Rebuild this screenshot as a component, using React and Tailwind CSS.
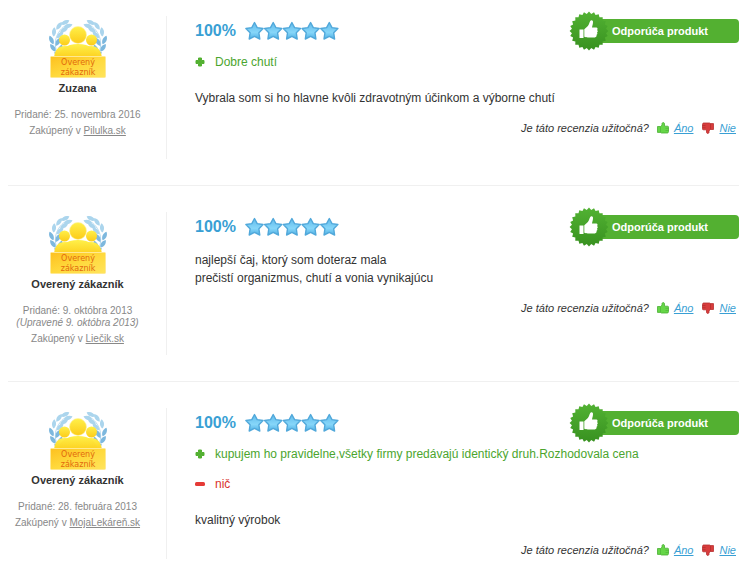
const reviews = [
  {
    name: 'Zuzana',
    added: '25. novembra 2016',
    shop: 'Pilulka.sk',
    pros: ['Dobre chutí'],
    cons: [],
    text: ['Vybrala som si ho hlavne kvôli zdravotným účinkom a výborne chutí'],
  },
  {
    name: 'Overený zákazník',
    added: '9. októbra 2013',
    edited: '9. októbra 2013',
    shop: 'Liečik.sk',
    pros: [],
    cons: [],
    text: ['najlepší čaj, ktorý som doteraz mala', 'prečistí organizmus, chutí a vonia vynikajúcu'],
  },
  {
    name: 'Overený zákazník',
    added: '28. februára 2013',
    shop: 'MojaLekáreň.sk',
    pros: ['kupujem ho pravidelne,všetky firmy predávajú identický druh.Rozhodovala cena'],
    cons: ['nič'],
    text: ['kvalitný výrobok'],
  },
];

// x, y, rotation of each leaf on the left branch
const leaves = [
  [3, 28, -35],
  [1.5, 20, -25],
  [4, 12, 5],
  [9, 6, 35],
  [15, 2.5, 65],
  [10, 29, 25],
  [8, 22, 30],
  [10, 15, 45],
  [14, 10, 60],
  [18, 6, 70],
  [8, 35, -50],
];

function Laurel() {
  return (
    <g>
      <path d="M9 36C2 25 5 11 18 4" fill="none" stroke="#a5d0ea" strokeWidth="0.8" />
      {leaves.map(([x, y, angle]) => (
        <path
          key={`${x}-${y}`}
          transform={`translate(${x} ${y}) rotate(${angle})`}
          d="M0-4.800C2.800-2 2.600 2 0 4.600-2.600 2-2.800-2 0-4.800z"
          fill={y > 17 ? '#7db8de' : '#abd5ed'}
        />
      ))}
    </g>
  );
}

function VerifiedBadge() {
  return (
    <svg className="block h-[60px] w-14 overflow-visible" viewBox="0 0 56 60" role="img" aria-label="Overený zákazník">
      <defs>
        <linearGradient id="gold" x1="0" y1="0" x2="0" y2="1">
          <stop offset="0" stopColor="#fff04a" />
          <stop offset="1" stopColor="#fccb18" />
        </linearGradient>
        <linearGradient id="plate" x1="0" y1="0" x2="1" y2="1">
          <stop offset="0" stopColor="#fdc01f" />
          <stop offset="0.5" stopColor="#ffd93c" />
          <stop offset="1" stopColor="#ffe45c" />
        </linearGradient>
      </defs>
      <Laurel />
      <g transform="translate(56 0) scale(-1 1)">
        <Laurel />
      </g>
      <g fill="url(#gold)">
        <circle cx="14.5" cy="20" r="5.5" />
        <circle cx="41.5" cy="20" r="5.5" />
        <path d="M4 40c0-10 4-14 11-14s9 4 10 14z" />
        <path d="M31 40c1-10 4-14 10-14s11 4 11 14z" />
        <path d="M8 40c1-11 8-16 20-16s19 5 20 16z" />
        <circle cx="28" cy="15" r="8.500" stroke="#fff3a0" strokeWidth="0.6" />
      </g>
      <rect x="0.5" y="36.500" width="55" height="21" rx="1" fill="url(#plate)" stroke="#ffe992" />
      <g fill="#e2690c" fontFamily="DejaVu Sans, sans-serif" fontSize="8" textAnchor="middle">
        <text x="28" y="45">Overený</text>
        <text x="28" y="55">zákazník</text>
      </g>
    </svg>
  );
}

function Stars() {
  return (
    <svg className="h-5 w-[94px]" viewBox="0 0 94 20" role="img" aria-label="5 z 5 hviezdičiek">
      <defs>
        <linearGradient id="star" x1="0" y1="0" x2="0" y2="1">
          <stop offset="0" stopColor="#62bcec" />
          <stop offset="0.6" stopColor="#86d6f9" />
          <stop offset="1" stopColor="#50b0e4" />
        </linearGradient>
      </defs>
      {[0, 1, 2, 3, 4].map((i) => (
        <path
          key={i}
          transform={`translate(${i * 18.7} 0)`}
          d="M9.500 1.500l2.700 5.100 5.900.9-4.200 4.300.9 6.200-5.300-2.600-5.300 2.600.9-6.200L.9 7.500l5.900-.9z"
          fill="url(#star)"
          stroke="#51a8da"
          strokeWidth="1.4"
          strokeLinejoin="round"
        />
      ))}
    </svg>
  );
}

const sealPoints = Array.from({ length: 48 }, (_, i) => {
  const r = i % 2 ? 17.2 : 19.4;
  const a = (i * Math.PI) / 24;
  return `${(20 + r * Math.cos(a)).toFixed(2)},${(20 + r * Math.sin(a)).toFixed(2)}`;
}).join(' ');

function Recommended() {
  return (
    <div className="flex shrink-0 items-center">
      <svg className="relative -mr-5 size-10" viewBox="0 0 40 40" aria-hidden="true">
        <defs>
          <linearGradient id="seal" x1="0" y1="0" x2="0" y2="1">
            <stop offset="0" stopColor="#52b233" />
            <stop offset="1" stopColor="#389120" />
          </linearGradient>
        </defs>
        <polygon points={sealPoints} fill="url(#seal)" />
        <path d="M10.500 18.500h4v8.500h-4z" fill="#fff" />
        <path
          d="M15.300 18.300l3.600-3.300c1.200-1.500 1.400-3.600 2.500-5.300.8-1 2.500-.5 2.600 1 .1 2-.7 3.900-1 5.700h4.200c1.500 0 1.800 1.800.9 2.500 1 .7.8 2.100-.1 2.500.7.8.3 2.100-.5 2.400.4 1.100-.2 2.600-1.700 2.600h-7c-1.500 0-2.300-.2-3.500-.6z"
          fill="#fff"
        />
      </svg>
      <div className="w-[150px] rounded-sm bg-[#53b031] pl-[23px] text-[11px] leading-6 font-bold text-white">
        Odporúča produkt
      </div>
    </div>
  );
}

function Thumb({ down }) {
  return (
    <svg className={down ? 'size-3 rotate-180' : 'size-3'} viewBox="0 0 12 12" aria-hidden="true">
      <path
        d="M.5 4.500h3L5 3.200V1.500c.3-1.200 2.200-1.200 2.500 0v2.700h3c.8 0 1 .4 1 1v4.300c0 .9-.4 1.500-1.300 1.500H4.500l-1-.6h-3z"
        fill={down ? '#d83c3c' : '#66d648'}
        stroke={down ? '#b83030' : '#4aae34'}
        strokeWidth="0.8"
      />
      <path d="M3.500 4.500v6M8.500 6.300h3M8.500 8.500h3" stroke={down ? '#a82a2a' : '#4aae34'} strokeWidth="0.6" />
    </svg>
  );
}

function Point({ minus, children }) {
  return (
    <li className={minus ? 'flex items-center gap-[10px] text-[#d9322f]' : 'flex items-center gap-[10px] text-[#4ba52e]'}>
      <svg className="size-[10px] shrink-0" viewBox="0 0 10 10" aria-hidden="true">
        {minus ? (
          <rect x="0" y="3" width="10" height="4" rx="1.500" fill="#e53a36" />
        ) : (
          <path d="M3.500 1h3v2.500H9v3H6.500V9h-3V6.500H1v-3h2.500z" fill="#53b031" stroke="#53b031" strokeLinejoin="round" />
        )}
      </svg>
      {children}
    </li>
  );
}

function Review({ review }) {
  const { name, added, edited, shop, pros, cons, text } = review;
  const points = pros.length + cons.length > 0;

  return (
    <article className="flex border-b border-[#f0f0f0] py-[26px] first:pt-4 last:border-b-0">
      <div className="flex w-[159px] shrink-0 flex-col items-center border-r border-[#f0f0f0] pt-1 pr-[19px] text-center">
        <VerifiedBadge />
        <h3 className="text-[11px] leading-4 font-bold text-[#333]">{name}</h3>
        <div className="mt-[13px] text-[10px] leading-3 whitespace-nowrap text-[#888]">
          <p>Pridané: {added}</p>
          {edited && <p className="italic">(Upravené {edited})</p>}
          <p className="mt-1">
            Zakúpený v <a href="#" className="underline">{shop}</a>
          </p>
        </div>
      </div>

      <div className="flex min-h-[143px] min-w-0 flex-1 flex-col pl-7">
        <div className="-mt-[5px] flex h-10 items-center">
          <span className="text-base leading-5 font-bold text-[#399fd4]">100%</span>
          <span className="ml-[9px] flex flex-1">
            <Stars />
          </span>
          <Recommended />
        </div>
        {points && (
          <ul className="mt-[2px] mb-[9px] flex flex-col gap-3 text-xs leading-[18px]">
            {pros.map((item) => (
              <Point key={item}>{item}</Point>
            ))}
            {cons.map((item) => (
              <Point key={item} minus>{item}</Point>
            ))}
          </ul>
        )}
        <div className={points ? 'mt-[9px] text-xs leading-[18px] text-[#333]' : 'mt-1 text-xs leading-[18px] text-[#333]'}>
          {text.map((line) => (
            <p key={line}>{line}</p>
          ))}
        </div>
        <div className="mt-3 mr-[3px] flex items-center justify-end text-[11px] leading-[18px] text-[#333] italic">
          <span className="mr-2">Je táto recenzia užitočná?</span>
          <Thumb />
          <a href="#" className="mr-[9px] ml-[5px] text-[#399fd4] underline">Áno</a>
          <Thumb down />
          <a href="#" className="ml-[5px] text-[#399fd4] underline">Nie</a>
        </div>
      </div>
    </article>
  );
}

export default function App() {
  return (
    <main className="bg-white pr-[11px] pl-2 font-['Liberation_Sans',Arial,sans-serif]">
      {reviews.map((review) => (
        <Review key={review.added} review={review} />
      ))}
    </main>
  );
}
